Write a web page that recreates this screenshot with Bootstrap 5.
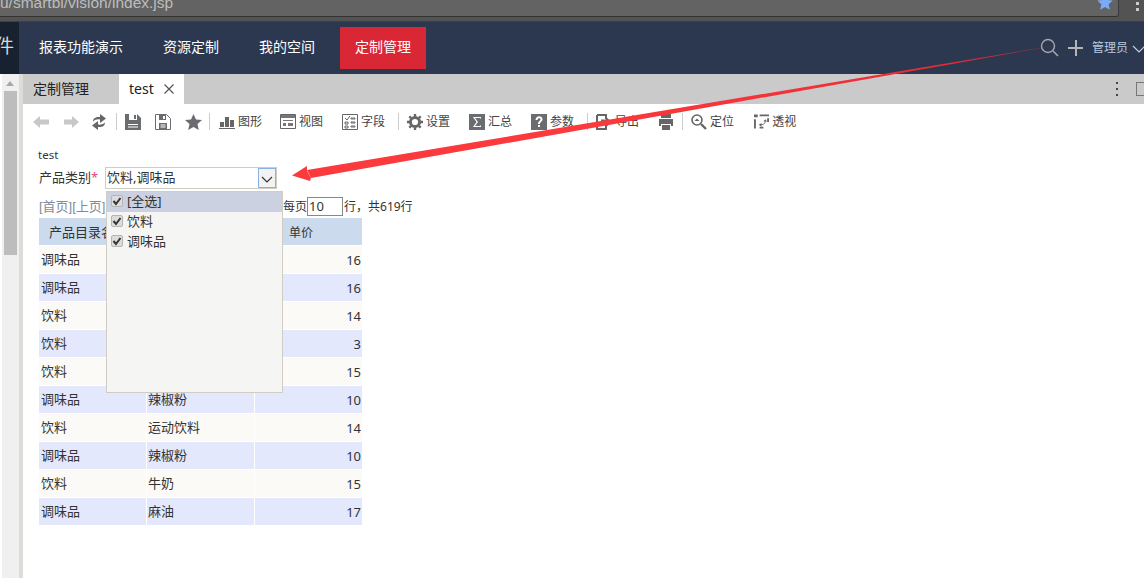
<!doctype html>
<html lang="zh"><head><meta charset="utf-8"><title>test</title>
<link rel="stylesheet" href="https://cdn.jsdelivr.net/npm/bootstrap@5.3.0/dist/css/bootstrap.min.css">
<style>
html,body{height:578px;overflow:hidden}
body{font-family:"Noto Sans","Noto Sans CJK SC",sans-serif;font-size:12px;color:#333;background:#fff;position:relative}
.chrome-bar{height:22px;background:#535353;border-bottom:1px solid #3f3f3f}
.addr{height:17px;width:1119px;background:#636363;border-bottom:1px solid #333;border-right:1px solid #3a3a3a;border-bottom-right-radius:3px;color:#bdbdbd;font-family:"Liberation Sans",sans-serif;font-size:15.5px;line-height:7px;padding:0;overflow:hidden;position:relative}
.addr span{position:relative;top:-1px}
.addr svg{position:absolute;left:1097px;top:-5px}
.chrome-dots{gap:3px;margin:2px 0 0 17px}
.chrome-dots i{display:block;width:3px;height:3px;background:#ccc}
.topnav{height:52px;background:#2c3850;color:#fff}
.logo{width:19px;background:#17212f;color:#d8d8d8;font-size:19px;overflow:hidden;line-height:49px;text-indent:-5px;flex:none}
.top-item{font-size:14px;padding:0 15px;height:42px;line-height:39px;margin-top:5px;white-space:nowrap;flex:none}
.top-item.on{background:#da2735;width:86px}
.w1{width:129px;padding-left:20px}.w2,.w3{width:96px}
.admin{color:#b9c9e0;font-size:12px;line-height:52px;margin-left:auto;width:112px;position:relative;flex:none}
.admin-name{left:60px}
.workarea{height:504px}
.leftbar{width:19px;flex:none;background:#fff;display:flex}
.sb{width:17px;margin-left:2px;background:#f0f0f0;position:relative}
.sb::before{content:"";position:absolute;left:4px;top:7px;border:4px solid transparent;border-top:0;border-bottom:5px solid #a8a8a8}
.sb::after{content:"";position:absolute;left:2px;top:17px;width:13px;height:164px;background:#bdbdbd}
.split{width:4px;background:#dedcd8;flex:none}
.tabbar{height:30px;background:#cacaca;font-size:14px;color:#222}
.tabx{width:96px;padding-left:10px;line-height:30px}
.tab-on{width:65px;background:#fff;line-height:29px;padding-left:10px;font-size:14px;position:relative}
.tab-on svg{position:absolute;left:45px;top:10px}
.tabend{margin-left:auto;width:28px;position:relative}
.kebab i{display:block;width:2px;height:2px;background:#444;margin:0 0 4px}
.kebab{position:absolute;left:0;top:8px}
.sq{position:absolute;left:20px;top:8px;width:14px;height:14px;border:1px solid #777;border-right:0}
.tools{height:35px;padding-left:10px;color:#444;font-size:12px;white-space:nowrap;align-items:center}
.ti{display:flex;align-items:center;flex:none;gap:3px}
.ti svg{display:block;flex:none}
.tools>svg{flex:none}
.vsep{width:1px;height:17px;background:#ccc;flex:none}
.formzone{padding-left:16px;position:relative;height:420px}
.ttl{font-size:11.5px;line-height:14px;padding-top:9px;height:23px;color:#333;margin-left:-1px}
.frow{height:29px;padding-top:5px}
.lab{width:66px;font-size:13px;line-height:20px;color:#333}
.lab em{color:#e8457a;font-style:normal}
.combo{width:172px;height:22px;border:1px solid #cfcdc6;background:#fff;font-size:13px;line-height:18px;padding-left:1px;position:relative}
.combo b{position:absolute;right:0;top:0;width:18px;height:20px;border:1px solid #8ab0e6;background:#f3f3f3;font-weight:400}
.pager{height:21px;margin-top:6px;line-height:20px;color:#7f8b99;font-family:"Liberation Sans","Noto Sans CJK SC",sans-serif;font-size:13px;white-space:nowrap}
.pg-wrap{left:283px;top:197px;line-height:20px;color:#333;font-size:12px;white-space:nowrap}
.pg-in{width:36px;height:19px;border:1px solid #888;color:#333;padding-left:1px;font-size:13px;line-height:17px}
.pg-txt{margin-left:1px;font-size:12px}
.grid-t{display:grid;grid-template-columns:107px 107px 107px;column-gap:1px;width:323px;font-size:13px;color:#333;row-gap:1px}
.grid-t>div{height:27px;line-height:26px;padding:0 2px;white-space:nowrap}
.grid-t>div:nth-child(3n+2){padding-left:1px}
.grid-t .hd{background:#ccdaee;padding-left:10px;line-height:29px}
.grid-t .hd-price{padding-left:34px;font-size:12px;line-height:30px}
.r1{background:#fbfaf6}.r2{background:#e3e8fd}
.grid-t .num{text-align:right;padding-right:1px;font-size:13px;line-height:28px}
.popup{position:absolute;left:106px;top:191px;width:177px;height:202px;background:#f5f5f3;border:1px solid #cfcdc6;font-size:13px;color:#333}
.opt{height:20px;line-height:16px;display:flex;align-items:center;padding:0 0 3px 4px;gap:4px}
.opt.sel{background:#cbd1e0}
.ck{width:12px;height:12px;border:1px solid #b5b5b5;border-radius:2px;background:#dcdcdc;color:#333;display:flex;flex:none}
.arrow{position:absolute;left:0;top:0;pointer-events:none}
</style></head><body>
<div class="chrome-bar d-flex"><div class="addr"><span>u/smartbi/vision/index.jsp</span><svg width="16" height="16" viewBox="0 0 16 16"><path d="M8 0l2.300 5 5.400.6-4 3.700 1.100 5.400L8 12l-4.800 2.700 1.100-5.400-4-3.700L5.700 5z" fill="#7baaf7"/></svg></div><div class="chrome-dots d-flex flex-column"><i></i><i></i></div></div>
<div class="topnav d-flex">
 <div class="logo">件</div>
 <div class="top-item w1">报表功能演示</div><div class="top-item w2">资源定制</div><div class="top-item w3">我的空间</div>
 <div class="top-item on">定制管理</div>
 <div class="admin"><svg width="112" height="52" viewBox="0 0 112 52" class="position-absolute start-0 top-0"><circle cx="16" cy="24" r="6.500" fill="none" stroke="#a5a8ae" stroke-width="1.400"/><path d="M21 29l5 5" stroke="#a5a8ae" stroke-width="1.600"/><path d="M44 18v16M36 26h15" stroke="#b5b5b5" stroke-width="2"/><path d="M101 24l6 6 6-6" fill="none" stroke="#c5cedb" stroke-width="1.200"/></svg><span class="admin-name position-absolute">管理员</span></div>
</div>
<div class="workarea d-flex">
 <div class="leftbar"><div class="sb"></div></div><div class="split"></div>
 <div class="flex-grow-1 d-flex flex-column overflow-hidden">
  <div class="tabbar d-flex"><div class="tabx">定制管理</div><div class="tab-on">test<svg width="10" height="10" viewBox="0 0 10 10"><path d="M.5.5l9 9M9.500.5l-9 9" stroke="#555" stroke-width="1.200"/></svg></div><div class="tabend"><div class="kebab"><i></i><i></i><i></i></div><div class="sq"></div></div></div>
  <div class="tools d-flex">
   <svg width="17" height="14" viewBox="0 0 17 14"><path d="M0 7l7-6v3.500h9v5H7V13z" fill="#c8c8c8"/></svg>
   <svg style="margin-left:13px" width="17" height="14" viewBox="0 0 17 14"><path d="M16 7L9 1v3.500H1v5h8V13z" fill="#c8c8c8"/></svg>
   <svg style="margin-left:12px" width="14" height="16" viewBox="0 0 14 16"><path d="M1 7.500C1 4 4 2.500 8 3V0l6 4.500L8 9V5.500C5 5 3 5.800 1 7.500zM13 8.500C13 12 10 13.500 6 13v3l-6-4.500L6 7v3.500c3 .5 5-.3 7-2z" fill="#666"/></svg>
   <i class="vsep" style="margin-left:10px"></i>
   <svg style="margin-left:8px" width="16" height="16" viewBox="0 0 16 16"><path d="M0 0h12l4 4v12H0z" fill="#6b6c70"/><path d="M4 0h8v6H4zM3 10h10v1H3zM3 12.500h10v1H3z" fill="#fff"/><path d="M9 1h2v4H9z" fill="#6b6c70"/></svg>
   <svg style="margin-left:14px" width="16" height="16" viewBox="0 0 16 16"><path d="M.5.5h11l4 4v11H.5z" fill="#fff" stroke="#6b6c70"/><path d="M4 1h7v5H4zM4 9h8v6H4z" fill="#6b6c70"/><path d="M5.500 10.500h5v1h-5zM5.500 12.500h5v1h-5zM8 2h2v3H8z" fill="#fff"/></svg>
   <svg style="margin-left:14px" width="17" height="16" viewBox="0 0 17 16"><path d="M8.500 0l2.500 5.500 6 .6-4.500 4 1.300 5.900-5.300-3-5.300 3 1.300-5.900-4.500-4 6-.6z" fill="#6b6c70"/></svg>
   <i class="vsep" style="margin-left:7px"></i>
   <div class="ti" style="margin-left:9px"><svg width="16" height="14" viewBox="0 0 16 14"><path d="M0 13h16v1H0zM1 7h4v5H1zM6 2h4v10H6zM11 5h4v7h-4z" fill="#666"/></svg><span>图形</span></div>
   <div class="ti" style="margin-left:18px"><svg width="16" height="15" viewBox="0 0 16 15"><path d="M.5.500h15v14H.5z" fill="#fff" stroke="#666"/><path d="M1 1h14v3H1zM3 6h10v1H3zM3 9h3v3H3zM8 9h5v3H8z" fill="#777"/></svg><span>视图</span></div>
   <div class="ti" style="margin-left:19px"><svg width="16" height="16" viewBox="0 0 16 16"><path d="M.5.500h15v15H.5z" fill="#fff" stroke="#666"/><path d="M3 4l2 2 3-4M3 8h3v2H3zM3 12h3v2H3zM9 4h4v1H9zM9 8h4v1H9zM9 12h4v1H9z" fill="none" stroke="#666" stroke-width="1"/></svg><span>字段</span></div>
   <i class="vsep" style="margin-left:13px"></i>
   <div class="ti" style="margin-left:8px"><svg width="16" height="16" viewBox="0 0 16 16"><circle cx="8" cy="8" r="4.600" fill="none" stroke="#666" stroke-width="3"/><path d="M8 0v16M0 8h16M2.300 2.300l11.400 11.400M13.700 2.300L2.300 13.700" stroke="#666" stroke-width="2.400" stroke-dasharray="2.400 11.200 2.400 0"/></svg><span>设置</span></div>
   <div class="ti" style="margin-left:19px"><svg width="16" height="16" viewBox="0 0 16 16"><path d="M0 0h16v16H0z" fill="#6b6c70"/><path d="M4 3h8v2l-1-1H6l3 4-3 4h5l1-1v2H4l3.500-5z" fill="#fff"/></svg><span>汇总</span></div>
   <div class="ti" style="margin-left:19px"><svg width="16" height="16" viewBox="0 0 16 16"><path d="M0 0h16v16H0z" fill="#6b6c70"/><path d="M4.500 6c0-5 7-5 7-.8 0 2.500-2.500 2.500-2.500 4.800H7c0-3 2.500-3 2.500-4.800 0-1.500-3-1.500-3 .8zM7 11h2v2H7z" fill="#fff"/></svg><span>参数</span></div>
   <i class="vsep" style="margin-left:13px"></i>
   <div class="ti" style="margin-left:8px"><svg width="16" height="16" viewBox="0 0 16 16"><path d="M1 1h9v4M10 11v4H1V1" fill="none" stroke="#666" stroke-width="2"/><path d="M5 5.500h5V3l6 5-6 5v-2.500H5z" fill="#666"/></svg><span>导出</span></div>
   <svg style="margin-left:19px" width="16" height="16" viewBox="0 0 16 16"><path d="M3 0h10v4H3zM1 5h14v7h-2v-2H3v2H1zM4 11h8v5H4z" fill="#666"/></svg>
   <i class="vsep" style="margin-left:8px"></i>
   <div class="ti" style="margin-left:8px"><svg width="16" height="16" viewBox="0 0 16 16"><circle cx="6" cy="6" r="5" fill="none" stroke="#666" stroke-width="1.600"/><path d="M10 10l5 5" stroke="#666" stroke-width="2.400"/><path d="M3.500 7L6 4.500 8.500 7z" fill="#666"/></svg><span>定位</span></div>
   <div class="ti" style="margin-left:20px"><svg width="15" height="15" viewBox="0 0 16 15"><path d="M0 0h4v3H0zM0 5h2v10H0zM6 0h10v2H6zM14 4h2v4h-2zM6 13h4v2H6z" fill="#666"/><path d="M7 11c4 0 5-2 5-4" fill="none" stroke="#666"/><path d="M10 7.500h4L12 5zM5 11l3-2v4z" fill="#666"/></svg><span>透视</span></div>
  </div>
  <div class="formzone">
   <div class="ttl">test</div>
   <div class="frow d-flex"><div class="lab">产品类别<em>*</em></div><div class="combo">饮料,调味品<b><svg width="16" height="18" viewBox="0 0 16 18"><path d="M3 6l5 5 5-5" fill="none" stroke="#333" stroke-width="1.200"/></svg></b></div></div>
   <div class="pager">[首页][上页][</div>
   <div class="grid-t">
    <div class="hd">产品目录名称</div><div class="hd"></div><div class="hd hd-price">单价</div>
    <div class="r1">调味品</div><div class="r1"></div><div class="r1 num">16</div>
    <div class="r2">调味品</div><div class="r2"></div><div class="r2 num">16</div>
    <div class="r1">饮料</div><div class="r1"></div><div class="r1 num">14</div>
    <div class="r2">饮料</div><div class="r2"></div><div class="r2 num">3</div>
    <div class="r1">饮料</div><div class="r1"></div><div class="r1 num">15</div>
    <div class="r2">调味品</div><div class="r2">辣椒粉</div><div class="r2 num">10</div>
    <div class="r1">饮料</div><div class="r1">运动饮料</div><div class="r1 num">14</div>
    <div class="r2">调味品</div><div class="r2">辣椒粉</div><div class="r2 num">10</div>
    <div class="r1">饮料</div><div class="r1">牛奶</div><div class="r1 num">15</div>
    <div class="r2">调味品</div><div class="r2">麻油</div><div class="r2 num">17</div>
   </div>
  </div>
 </div>
</div>
<div class="pg-wrap d-flex position-absolute"><span>每页</span><span class="pg-in">10</span><span class="pg-txt">行，共619行</span></div>
<div class="popup">
 <div class="opt sel"><span class="ck"><svg width="10" height="10" viewBox="0 0 10 10"><path d="M1.500 5l2.500 3 4.500-6" fill="none" stroke="#333" stroke-width="2"/></svg></span><span>[全选]</span></div>
 <div class="opt"><span class="ck"><svg width="10" height="10" viewBox="0 0 10 10"><path d="M1.500 5l2.500 3 4.500-6" fill="none" stroke="#333" stroke-width="2"/></svg></span><span>饮料</span></div>
 <div class="opt"><span class="ck"><svg width="10" height="10" viewBox="0 0 10 10"><path d="M1.500 5l2.500 3 4.500-6" fill="none" stroke="#333" stroke-width="2"/></svg></span><span>调味品</span></div>
</div>
<svg class="arrow" width="1144" height="578" viewBox="0 0 1144 578"><defs><linearGradient id="gr" gradientUnits="userSpaceOnUse" x1="1075" y1="42" x2="600" y2="135"><stop offset="0" stop-color="#ea2b35" stop-opacity=".15"/><stop offset=".25" stop-color="#ea2b35"/><stop offset="1" stop-color="#fa3a3c"/></linearGradient></defs><path d="M1075 42L307 170 311 178z" fill="url(#gr)"/><path d="M292 175.500L307 166v5l4 7-1 3z" fill="#fa3a3c"/></svg>
<script src="https://cdn.jsdelivr.net/npm/bootstrap@5.3.0/dist/js/bootstrap.bundle.min.js"></script>
</body></html>
